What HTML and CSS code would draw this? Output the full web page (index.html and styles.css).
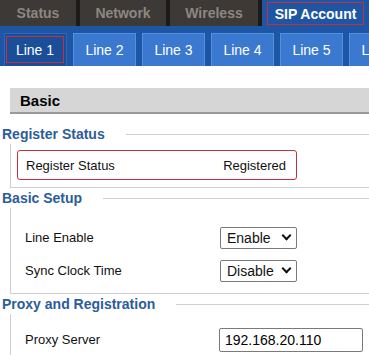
FILE: index.html
```html
<!DOCTYPE html>
<html lang="en">
<head>
  <meta charset="UTF-8">
  <title>SIP Account</title>
  <link rel="stylesheet" href="styles.css">
</head>
<body>
  <div class="topnav">
    <a class="tab tab-status">Status</a>
    <a class="tab tab-network">Network</a>
    <a class="tab tab-wireless">Wireless</a>
    <a class="tab tab-sip active"><span>SIP Account</span></a>
  </div>
  <div class="linebar">
    <button class="line active"><span>Line 1</span></button>
    <button class="line">Line 2</button>
    <button class="line">Line 3</button>
    <button class="line">Line 4</button>
    <button class="line">Line 5</button>
    <button class="line">Line 6</button>
  </div>

  <div class="content">
    <div class="page-title">Basic</div>

    <div class="group group-first">
      <div class="group-title"><span>Register Status</span></div>
      <div class="group-body status">
        <div class="status-box">
          <span>Register Status</span>
          <span>Registered</span>
        </div>
      </div>
    </div>

    <div class="group">
      <div class="group-title"><span>Basic Setup</span></div>
      <div class="group-body setup">
        <div class="row">
          <label>Line Enable</label>
          <div class="select">Enable <span class="chev"></span></div>
        </div>
        <div class="row">
          <label>Sync Clock Time</label>
          <div class="select">Disable <span class="chev"></span></div>
        </div>
      </div>
    </div>

    <div class="group">
      <div class="group-title"><span>Proxy and Registration</span></div>
      <div class="group-body proxy">
        <div class="row">
          <label>Proxy Server</label>
          <input type="text" class="text-input" value="192.168.20.110">
        </div>
      </div>
    </div>
  </div>
</body>
</html>
```

FILE: styles.css
```css
body {
  margin: 0;
  font-family: "Liberation Sans", Arial, sans-serif;
  font-size: 13px;
  color: #111;
  background: #fff;
  overflow: hidden;
}
.topnav {
  display: flex;
  gap: 4px;
  height: 26px;
  background: #1d1b19;
}
.tab {
  display: flex;
  align-items: center;
  justify-content: center;
  background: #3d3936;
  color: #8c8782;
  font-weight: bold;
  font-size: 14px;
}
.tab-status { width: 76px; }
.tab-network { width: 86px; }
.tab-wireless { width: 88px; }
.tab-sip {
  flex: 1;
  background: #1f56a3;
  color: #fff;
  padding: 2px 5px 1px;
}
.tab-sip span {
  flex: 1;
  align-self: stretch;
  display: flex;
  align-items: center;
  justify-content: center;
  border: 1px solid #c3303f;
}
.linebar {
  display: flex;
  gap: 6px;
  height: 40px;
  padding: 7px 0 0 4px;
  box-sizing: border-box;
  background: #1d56a5;
  overflow: hidden;
}
.line {
  flex: 0 0 63px;
  height: 33px;
  border: 1px solid #5590de;
  border-bottom: none;
  background: #3a79cf;
  color: #fff;
  font-family: inherit;
  font-size: 14px;
  padding: 0;
}
.line.active {
  background: #1b4e99;
  border-color: #2f67b5;
  padding: 2px 2px 3px 1px;
}
.line.active span {
  display: flex;
  align-items: center;
  justify-content: center;
  height: 100%;
  border: 1px solid #c3303f;
  box-sizing: border-box;
}
.content {
  padding-top: 22px;
}
.page-title {
  margin-left: 10px;
  height: 24px;
  line-height: 25px;
  padding-left: 10px;
  background: #d6d6d6;
  border-bottom: 2px solid #9a9a9a;
  font-weight: bold;
  font-size: 15px;
  color: #000;
}
.group-title {
  display: flex;
  align-items: center;
  padding-left: 2px;
  height: 20px;
  font-weight: bold;
  font-size: 14px;
  color: #2b5c9b;
}
.group-title::after {
  content: "";
  flex: 1;
  margin-left: 21px;
  border-top: 1px solid #cfcfcf;
}
.group-first .group-title {
  margin-top: 10px;
}
.group-body {
  margin-left: 10px;
  border-left: 1px solid #cfcfcf;
  border-bottom: 1px solid #cfcfcf;
}
.status {
  padding: 6px 0 7px 6px;
}
.status-box {
  display: flex;
  justify-content: space-between;
  align-items: center;
  width: 260px;
  height: 28px;
  padding: 0 10px 0 8px;
  border: 1px solid #c3303f;
  border-radius: 3px;
}
.setup {
  padding: 13px 0 6px 14px;
}
.proxy {
  padding: 9px 0 6px 14px;
}
.row {
  display: flex;
  align-items: center;
  height: 33px;
}
.row label {
  width: 195px;
}
.select {
  display: flex;
  align-items: center;
  justify-content: space-between;
  height: 22px;
  padding: 0 5px 0 6px;
  box-sizing: border-box;
  width: 77px;
  border: 1px solid #7a7a7a;
  border-radius: 2px;
  font-size: 14px;
}
.chev {
  width: 5px;
  height: 5px;
  border-right: 2px solid #111;
  border-bottom: 2px solid #111;
  transform: rotate(45deg);
  margin: -4px 1px 0 0;
}
.text-input {
  width: 144px;
  height: 24px;
  box-sizing: border-box;
  border: 1px solid #7a7a7a;
  border-radius: 2px;
  padding: 0 5px;
  font-family: inherit;
  font-size: 14px;
  margin-left: -1px;
}
```
